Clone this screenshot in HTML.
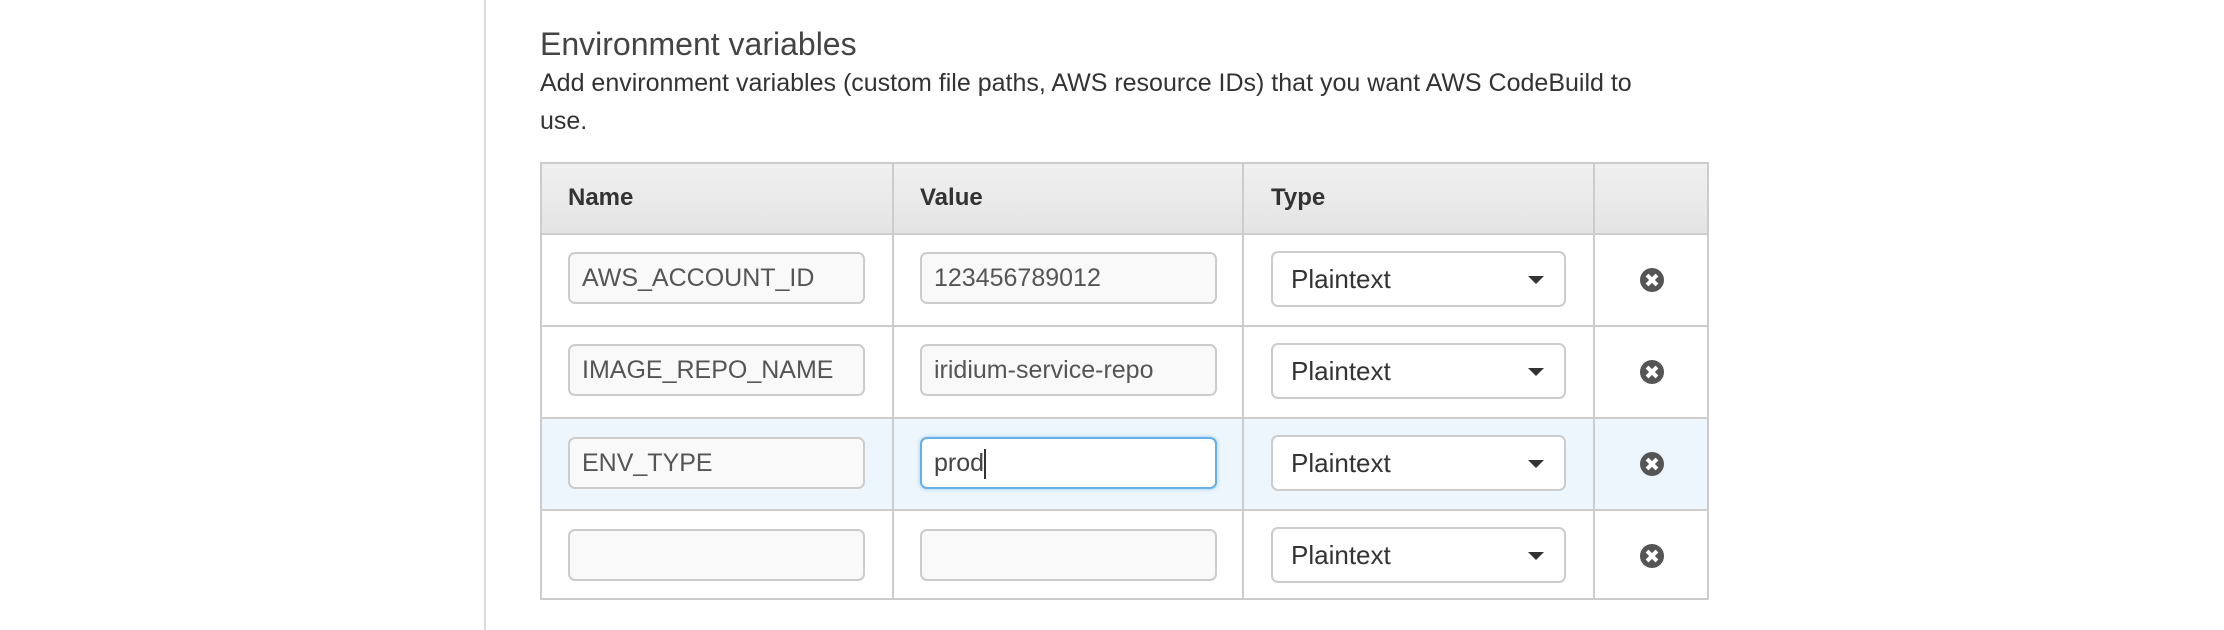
<!DOCTYPE html>
<html><head><style>
html,body{margin:0;padding:0;width:2224px;height:630px;background:#fff;overflow:hidden;font-family:"Liberation Sans",Arial,sans-serif;}
.vl{position:absolute;left:484px;top:0;width:2px;height:630px;background:#ddd;}
h2{position:absolute;left:540px;top:26px;margin:0;font-weight:normal;font-size:32px;color:#444;}
.desc{position:absolute;left:540px;top:64px;width:1130px;font-size:25px;line-height:38px;color:#333;}
.t{position:absolute;left:540px;top:162px;width:1169px;height:438px;border:2px solid #ccc;box-sizing:border-box;}
.hd{position:absolute;left:0;top:0;right:0;height:69px;background:linear-gradient(#f0f0f0,#e4e4e4);border-bottom:2px solid #ccc;}
.hl{position:absolute;top:20px;font-weight:bold;font-size:24px;color:#333;}
.cl{position:absolute;top:0;bottom:0;width:2px;background:#ccc;}
.rl{position:absolute;left:0;right:0;height:2px;background:#ccc;}
.inp{position:absolute;width:297px;height:52px;box-sizing:border-box;border:2px solid #ccc;border-radius:7px;background:#f9f9f9;font-size:25px;color:#555;padding-left:12px;line-height:48px;}
.foc{background:#fff;border-color:#66afe9;box-shadow:0 0 4px rgba(102,175,233,.6);color:#444;}
.sel{position:absolute;left:729px;width:295px;height:56px;box-sizing:border-box;border:2px solid #ccc;border-radius:7px;background:#fff;font-size:26px;color:#333;padding-left:18px;line-height:52px;}
.sel:after{content:"";position:absolute;right:20px;top:23px;border-left:8px solid transparent;border-right:8px solid transparent;border-top:8px solid #333;}
.x{position:absolute;left:1098px;width:24px;height:24px;border-radius:50%;background:#555;}
.x:before,.x:after{content:"";position:absolute;left:5px;top:10px;width:14px;height:4px;background:#fff;transform:rotate(45deg);}
.x:after{transform:rotate(-45deg);}
</style></head><body>
<div class="vl"></div>
<h2>Environment variables</h2>
<div class="desc">Add environment variables (custom file paths, AWS resource IDs) that you want AWS CodeBuild to use.</div>
<div class="t">
<div class="hd"></div>
<div style="position:absolute;left:0;right:0;top:253px;height:92px;background:#eef6fd"></div>
<div class="hl" style="left:26px">Name</div>
<div class="hl" style="left:378px">Value</div>
<div class="hl" style="left:729px">Type</div>
<div class="cl" style="left:350px"></div>
<div class="cl" style="left:700px"></div>
<div class="cl" style="left:1051px"></div>
<div class="rl" style="top:161px"></div>
<div class="rl" style="top:253px"></div>
<div class="rl" style="top:345px"></div>

<div class="inp" style="left:26px;top:88px">AWS_ACCOUNT_ID</div>
<div class="inp" style="left:378px;top:88px">123456789012</div>
<div class="sel" style="top:87px">Plaintext</div>
<div class="x" style="top:104px"></div>

<div class="inp" style="left:26px;top:180px">IMAGE_REPO_NAME</div>
<div class="inp" style="left:378px;top:180px">iridium-service-repo</div>
<div class="sel" style="top:179px">Plaintext</div>
<div class="x" style="top:196px"></div>

<div class="inp" style="left:26px;top:273px">ENV_TYPE</div>
<div class="inp foc" style="left:378px;top:273px">prod<span style="display:inline-block;width:2px;height:30px;background:#333;vertical-align:middle"></span></div>
<div class="sel" style="top:271px">Plaintext</div>
<div class="x" style="top:288px"></div>

<div class="inp" style="left:26px;top:365px"></div>
<div class="inp" style="left:378px;top:365px"></div>
<div class="sel" style="top:363px">Plaintext</div>
<div class="x" style="top:380px"></div>
</div>
</body></html>
